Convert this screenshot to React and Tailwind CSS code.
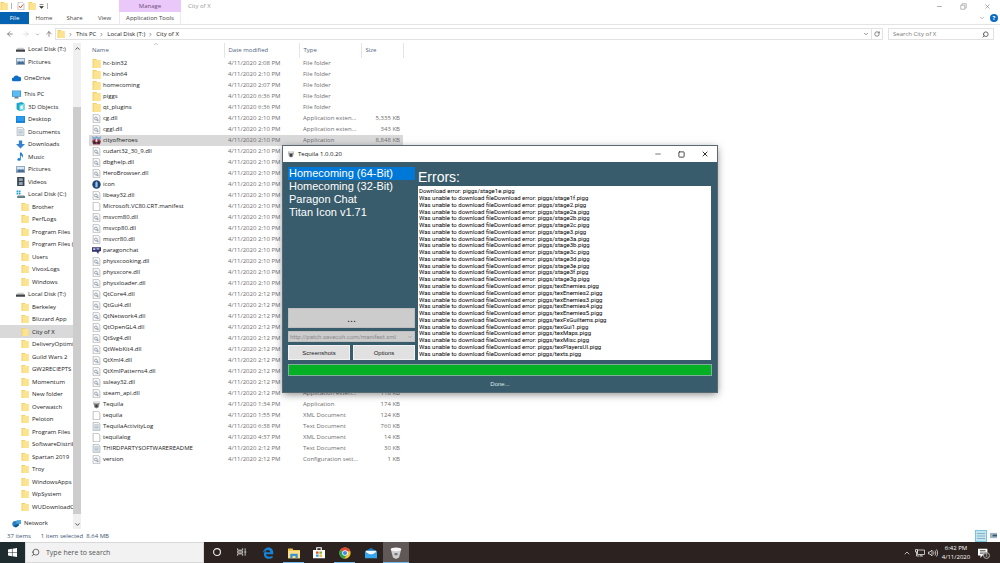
/**
 * Desktop — Explorer window with the Tequila launcher floating on top
 * and the taskbar along the bottom edge.
 */
import React from "react";
import {
  ArrowLeft,
  ArrowRight,
  ArrowUp,
  ChevronDown,
  ChevronRight,
  ChevronUp,
  Minus,
  RotateCw,
  Search,
  Square,
  X,
} from "lucide-react";
import clsx from "clsx";

const FILES = [
  ["hc-bin32", "folder", "4/11/2020 2:08 PM", "File folder", ""],
  ["hc-bin64", "folder", "4/11/2020 2:10 PM", "File folder", ""],
  ["homecoming", "folder", "4/11/2020 2:07 PM", "File folder", ""],
  ["piggs", "folder", "4/11/2020 6:36 PM", "File folder", ""],
  ["qt_plugins", "folder", "4/11/2020 6:36 PM", "File folder", ""],
  ["cg.dll", "dll", "4/11/2020 2:10 PM", "Application exten...", "5,335 KB"],
  ["cggl.dll", "dll", "4/11/2020 2:10 PM", "Application exten...", "343 KB"],
  ["cityofheroes", "hero", "4/11/2020 2:10 PM", "Application", "8,848 KB"],
  ["cudart32_30_9.dll", "dll", "4/11/2020 2:10 PM"],
  ["dbghelp.dll", "dll", "4/11/2020 2:10 PM"],
  ["HeroBrowser.dll", "dll", "4/11/2020 2:10 PM"],
  ["icon", "globe", "4/11/2020 2:10 PM"],
  ["libeay32.dll", "dll", "4/11/2020 2:10 PM"],
  ["Microsoft.VC80.CRT.manifest", "blank", "4/11/2020 2:10 PM"],
  ["msvcm80.dll", "dll", "4/11/2020 2:10 PM"],
  ["msvcp80.dll", "dll", "4/11/2020 2:10 PM"],
  ["msvcr80.dll", "dll", "4/11/2020 2:10 PM"],
  ["paragonchat", "chat", "4/11/2020 2:10 PM"],
  ["physxcooking.dll", "dll", "4/11/2020 2:10 PM"],
  ["physxcore.dll", "dll", "4/11/2020 2:10 PM"],
  ["physxloader.dll", "dll", "4/11/2020 2:10 PM"],
  ["QtCore4.dll", "dll", "4/11/2020 2:12 PM"],
  ["QtGui4.dll", "dll", "4/11/2020 2:12 PM"],
  ["QtNetwork4.dll", "dll", "4/11/2020 2:12 PM"],
  ["QtOpenGL4.dll", "dll", "4/11/2020 2:12 PM"],
  ["QtSvg4.dll", "dll", "4/11/2020 2:12 PM"],
  ["QtWebKit4.dll", "dll", "4/11/2020 2:12 PM"],
  ["QtXml4.dll", "dll", "4/11/2020 2:12 PM"],
  ["QtXmlPatterns4.dll", "dll", "4/11/2020 2:12 PM"],
  ["ssleay32.dll", "dll", "4/11/2020 2:12 PM"],
  ["steam_api.dll", "dll", "4/11/2020 2:12 PM", "Application exten...", "118 KB"],
  ["Tequila", "cup", "4/11/2020 1:34 PM", "Application", "174 KB"],
  ["tequila", "blank", "4/11/2020 1:55 PM", "XML Document", "124 KB"],
  ["TequilaActivityLog", "text", "4/11/2020 6:38 PM", "Text Document", "760 KB"],
  ["tequilalog", "blank", "4/11/2020 4:37 PM", "XML Document", "14 KB"],
  ["THIRDPARTYSOFTWAREREADME", "text", "4/11/2020 2:12 PM", "Text Document", "30 KB"],
  ["version", "dll", "4/11/2020 2:12 PM", "Configuration sett...", "1 KB"],
];

// [label, icon, indent level]
const TREE = [
  [
    ["Local Disk (T:)", "drive", 1],
    ["Pictures", "pictures", 1],
  ],
  [["OneDrive", "cloud", 0]],
  [
    ["This PC", "pc", 0],
    ["3D Objects", "cube", 1],
    ["Desktop", "desktop", 1],
    ["Documents", "text", 1],
    ["Downloads", "download", 1],
    ["Music", "music", 1],
    ["Pictures", "pictures", 1],
    ["Videos", "video", 1],
    ["Local Disk (C:)", "cdrive", 1],
    ["Brother", "folder", 2],
    ["PerfLogs", "folder", 2],
    ["Program Files", "folder", 2],
    ["Program Files (x86)", "folder", 2],
    ["Users", "folder", 2],
    ["VivoxLogs", "folder", 2],
    ["Windows", "folder", 2],
    ["Local Disk (T:)", "drive", 1],
    ["Berkeley", "folder", 2],
    ["Blizzard App", "folder", 2],
    ["City of X", "folder", 2],
    ["DeliveryOptimization", "folder", 2],
    ["Guild Wars 2", "folder", 2],
    ["GW2RECIEPTS", "folder", 2],
    ["Momentum", "folder", 2],
    ["New folder", "folder", 2],
    ["Overwatch", "folder", 2],
    ["Peloton", "folder", 2],
    ["Program Files", "folder", 2],
    ["SoftwareDistribution", "folder", 2],
    ["Spartan 2019", "folder", 2],
    ["Troy", "folder", 2],
    ["WindowsApps", "folder", 2],
    ["WpSystem", "folder", 2],
    ["WUDownloadCache", "folder", 2],
  ],
  [["Network", "network", 0]],
];

const INDENT = ["pl-3 gap-[3px]", "pl-4 gap-[3px]", "pl-[21px] gap-[3px]"];

const PIGGS = [
  "stage1f", "stage2", "stage2a", "stage2b", "stage2c", "stage3", "stage3a",
  "stage3b", "stage3c", "stage3d", "stage3e", "stage3f", "stage3g",
  "texEnemies", "texEnemies2", "texEnemies3", "texEnemies4", "texEnemies5",
  "texFxGuiItems", "texGui1", "texMaps", "texMisc", "texPlayersUI", "texts",
];

const PROFILES = [
  "Homecoming (64-Bit)",
  "Homecoming (32-Bit)",
  "Paragon Chat",
  "Titan Icon v1.71",
];

const GLYPHS = {
  folder: (
    <>
      <path d="M1 0h7l1 2h6v14H1z" fill="#f3d067" />
      <path d="M3 2h12v14H3z" fill="#fce390" />
    </>
  ),
  dll: (
    <>
      <path d="M2 .5h9l3 3v12H2z" fill="#f6f7f8" stroke="#979797" />
      <circle cx="7" cy="8" r="2.5" fill="none" stroke="#8c9ba8" strokeWidth="1.5" />
      <circle cx="10" cy="11" r="1.8" fill="#9aa8b5" />
    </>
  ),
  blank: <path d="M2 .5h9l3 3v12H2z" fill="#fff" stroke="#8f8f8f" />,
  text: (
    <>
      <path d="M2 .5h9l3 3v12H2z" fill="#f4f7f9" stroke="#8b8f92" />
      <path d="M4 5h8M4 7.5h8M4 10h8M4 12.5h8" stroke="#7d98a8" />
    </>
  ),
  hero: (
    <>
      <path d="M0 0l4 2 4-2 4 2 4-2-1 7H1z" fill="#86a9cf" />
      <path d="M0 9c3-5 13-5 16 0l-2 6H2z" fill="#a03a4c" />
      <circle cx="4.500" cy="11.500" r="2.700" fill="#3b2530" />
      <circle cx="11.500" cy="11.500" r="2.700" fill="#3b2530" />
      <path d="M7 5h2l1 5H6z" fill="#f1e3e3" />
    </>
  ),
  globe: (
    <>
      <circle cx="8" cy="8" r="7.500" fill="#1d4675" />
      <path d="M8 2l2 3v8H6V5z" fill="#9dc3e6" />
    </>
  ),
  chat: (
    <>
      <path d="M0 2h16v7l-4 1-1 4-3-4H0z" fill="#33366f" />
      <path d="M2 4h4v3H2zM8 4h5v2H8z" fill="#c7c9e6" />
    </>
  ),
  cup: (
    <>
      <path d="M2 3h12l-2 10-4 2-4-2z" fill="#8b8b8b" />
      <ellipse cx="8" cy="4" rx="6" ry="2" fill="#e4e4e4" />
      <path d="M6 8h4v5H6z" fill="#3e3e3e" />
    </>
  ),
  drive: (
    <>
      <path d="M1 8l2-3h10l2 3z" fill="#c9c9c9" />
      <path d="M0 8h16v4H0z" fill="#3f4347" />
    </>
  ),
  cdrive: (
    <>
      <path d="M1 1h3v3H1zM5 1h3v3H5zM1 5h3v3H1zM5 5h3v3H5z" fill="#20a0d8" />
      <path d="M3 9h12v2H3z" fill="#b9bdc0" />
      <path d="M2 11h14v3H2z" fill="#4b6a70" />
    </>
  ),
  pictures: (
    <>
      <path d="M0 2h16v12H0z" fill="#8a9fb5" />
      <path d="M1.500 3.500h13v4h-13z" fill="#d4e7f7" />
      <path d="M2 12l4-4 3 2 3-2 3 4z" fill="#2e5e8e" />
    </>
  ),
  cloud: <path d="M3 13a3.500 3.500 0 010-7 5 5 0 019-1 4 4 0 011 8z" fill="#0f6fc6" />,
  pc: (
    <>
      <path d="M0 1h16v11H0z" fill="#2f86c4" />
      <path d="M1 2h14v9H1z" fill="#5cbcf0" />
      <path d="M5 12h6l1 3H4z" fill="#6a8190" />
    </>
  ),
  cube: (
    <>
      <path d="M1 2l9-2 5 3v11l-9 2-5-3z" fill="#1fa5c6" />
      <path d="M6 5l9-2v11l-9 2z" fill="#6fd9ea" />
      <path d="M8 7l4-1v6l-4 1z" fill="#fff" />
    </>
  ),
  desktop: (
    <>
      <path d="M0 2h16v12H0z" fill="#0a78d1" />
      <path d="M1 3h14v8H1z" fill="#2a9bf0" />
    </>
  ),
  download: <path d="M5 1h6v6h5l-8 8-8-8h5z" fill="#3583cf" />,
  music: (
    <path
      d="M7 1v10a3 2.500 0 10 1.500 2V6c3 1 3 3 2 5 4-4 1-7-1-10z"
      fill="#1c80d4"
    />
  ),
  video: (
    <>
      <path d="M2 0h13v16H2z" fill="#3b4147" />
      <path d="M5 2h7v5H5zM5 9h7v5H5z" fill="#8aa4b8" />
    </>
  ),
  network: (
    <>
      <circle cx="6" cy="9" r="5.500" fill="#2a7fc0" />
      <path d="M8 2h8v7H8z" fill="#4aa6df" />
      <path d="M3 12l8-4 2 3-6 4z" fill="#16598f" />
    </>
  ),
};

function Glyph({ name, className = "size-2" }) {
  return (
    <svg viewBox="0 0 16 16" className={clsx("block shrink-0", className)} aria-hidden="true">
      {GLYPHS[name]}
    </svg>
  );
}

function Ribbon() {
  return (
    <header className="h-[25px] border-b border-[#e4e4e4] flex">
      <div className="flex flex-col">
        <div className="h-3 w-[119px] flex items-center gap-[3px]">
          <Glyph name="folder" />
          <span className="w-px h-[6px] bg-[#b5b5b5]" />
          <svg viewBox="0 0 16 16" className="size-2 ml-[2px]" aria-hidden="true">
            <path d="M2 .5h9l3 3v12H2z" fill="#fff" stroke="#8f8f8f" />
            <path d="M4 8l3 4 5-7" fill="none" stroke="#d2573b" strokeWidth="2" />
          </svg>
          <Glyph name="folder" />
          <svg viewBox="0 0 8 8" className="size-[5px]" aria-hidden="true">
            <path d="M1 1h6M1 4h6L4 7z" stroke="#333" fill="#333" />
          </svg>
          <span className="w-px h-[6px] bg-[#b5b5b5]" />
        </div>
        <nav className="h-3 flex text-[#444]">
          <button className="w-[29px] bg-[#0563b1] text-white">File</button>
          <button className="w-[30px]">Home</button>
          <button className="w-[31px]">Share</button>
          <button className="w-[29px]">View</button>
        </nav>
      </div>
      <div className="w-[62px] flex flex-col">
        <div className="h-3 bg-[#ebc8fa] text-[#6b4a78] grid place-items-center">Manage</div>
        <button className="h-3 text-[#444] whitespace-nowrap border-x border-[#f3e4f8]">
          Application Tools
        </button>
      </div>
      <h1 className="h-3 pl-[7px] leading-3 text-[#9a9a9a]">City of X</h1>
      <div className="ml-auto flex flex-col items-end text-[#777]">
        <div className="h-3 flex items-center gap-[17px] pr-[9px]">
          <button aria-label="Minimize"><Minus className="size-[7px]" strokeWidth={2} /></button>
          <button aria-label="Restore">
            <svg viewBox="0 0 14 14" className="size-[7px]" fill="none" stroke="currentColor">
              <path d="M1.500 4.500h8v8h-8zM4 4V1.500h8.500V10H10" />
            </svg>
          </button>
          <button aria-label="Close"><X className="size-[7px]" strokeWidth={2} /></button>
        </div>
        <div className="h-3 flex items-center gap-[5px] pr-[2px]">
          <button aria-label="Collapse ribbon"><ChevronDown className="size-[6px]" /></button>
          <button
            aria-label="Help"
            className="size-2 rounded-full bg-[#0a6cc0] text-white text-[6px] leading-2 font-bold"
          >
            ?
          </button>
        </div>
      </div>
    </header>
  );
}

function AddressBar() {
  return (
    <div className="h-[18px] flex items-center pl-[6px] pr-[6px] text-[#555]">
      <div className="flex items-center w-[49px]">
        <button aria-label="Back"><ArrowLeft className="size-2" /></button>
        <button aria-label="Forward" className="ml-2 text-[#d0d0d0]"><ArrowRight className="size-2" /></button>
        <button aria-label="Recent" className="ml-[5px]"><ChevronDown className="size-[5px]" /></button>
        <button aria-label="Up" className="ml-[5px]"><ArrowUp className="size-2" /></button>
      </div>
      <div className="flex-1 h-3 border border-[#e2e2e2] flex items-center pl-px text-[#222]">
        <Glyph name="folder" />
        {["This PC", "Local Disk (T:)", "City of X"].map((crumb) => (
          <React.Fragment key={crumb}>
            <ChevronRight className="size-[5px] mx-[3px] text-[#555]" strokeWidth={3} />
            <a href="#" className="whitespace-nowrap">{crumb}</a>
          </React.Fragment>
        ))}
        <button aria-label="History" className="ml-auto text-[#666]"><ChevronDown className="size-[6px]" strokeWidth={3} /></button>
        <span className="w-px h-full bg-[#e2e2e2] mx-[2px]" />
        <button aria-label="Refresh" className="pr-[2px] text-[#666]"><RotateCw className="size-[6px]" strokeWidth={3} /></button>
      </div>
      <label className="ml-[5px] w-[106px] h-3 border border-[#e2e2e2] flex items-center px-1">
        <input
          aria-label="Search City of X"
          placeholder="Search City of X"
          className="flex-1 min-w-0 outline-none placeholder:text-[#777]"
        />
        <Search className="size-[7px] -scale-x-100" strokeWidth={3} />
      </label>
    </div>
  );
}

function Sidebar() {
  return (
    <aside className="w-[82px] shrink-0 flex">
      <div className="flex-1 min-w-0 flex flex-col gap-1 text-[#222]">
        {TREE.map((group, i) => (
          <ul key={i}>
            {group.map(([label, icon, level], j) => (
              <li
                key={j}
                className={clsx(
                  "odd:h-3 even:h-[13px] flex items-center overflow-hidden whitespace-nowrap",
                  INDENT[level],
                  label === "City of X" && "bg-[#d9d9d9]",
                )}
              >
                <Glyph name={icon} className={level === 2 ? "size-2" : "size-[9px]"} />
                {label}
              </li>
            ))}
          </ul>
        ))}
      </div>
      <div className="w-2 mr-px bg-[#f0f0f0] text-[#444] flex flex-col items-center">
        <ChevronUp className="size-[7px] mt-[2px]" strokeWidth={3} />
        <div className="mt-[55px] w-full flex-1 bg-[#cdcdcd]" />
        <ChevronDown className="size-[7px] mt-[7px] mb-px" strokeWidth={3} />
      </div>
    </aside>
  );
}

function FileList() {
  return (
    <main className="flex-1 min-w-0 pl-[7px]">
      <table className="table-fixed w-[314px] leading-[11px] whitespace-nowrap text-[#6d6d6d]">
        <thead>
          <tr className="h-[15px] text-left text-[#51647d]">
            <th className="w-[135px] pl-[3px] font-normal border-r border-[#e5e5e5] relative">
              Name
              <ChevronUp className="absolute top-[-2px] left-16 size-[6px] text-[#888]" />
            </th>
            <th className="w-[75px] pl-1 font-normal border-r border-[#e5e5e5]">Date modified</th>
            <th className="w-[62px] pl-1 font-normal border-r border-[#e5e5e5]">Type</th>
            <th className="w-[42px] pl-1 font-normal border-r border-[#e5e5e5]">Size</th>
          </tr>
        </thead>
        <tbody>
          {FILES.map(([name, icon, date, type, size]) => (
            <tr key={name} className={clsx("h-[11px]", name === "cityofheroes" && "bg-[#d9d9d9]")}>
              <td className="text-[#222]">
                <div className="flex items-center gap-[2px] pl-[3px]">
                  <Glyph name={icon} className="size-[9px]" />
                  {name}
                </div>
              </td>
              <td className="pl-1">{date}</td>
              <td className="pl-1">{type}</td>
              <td className="pr-[3px] text-right">{size}</td>
            </tr>
          ))}
        </tbody>
      </table>
    </main>
  );
}

function StatusBar() {
  return (
    <footer className="h-[13px] flex items-center pl-[7px] pr-px text-[#3d5573]">
      <span>37 items</span>
      <span className="ml-[10px]">1 item selected&nbsp; 8.64 MB</span>
      <div className="ml-auto flex items-center">
        <button aria-label="Details view" className="size-3 bg-[#bfe6f2] border border-[#7cc3dc] grid place-items-center">
          <svg viewBox="0 0 8 8" className="size-2" stroke="#8fb2c2"><path d="M0 1.500h8M0 4h8M0 6.500h8" /></svg>
        </button>
        <button aria-label="Large icons" className="size-3 grid place-items-center">
          <svg viewBox="0 0 8 8" className="size-[7px]"><path d="M0 1h8v6H0z" fill="#9fb4c2" /><path d="M3 3h5v2H3z" fill="#33566e" /></svg>
        </button>
      </div>
    </footer>
  );
}

function Launcher() {
  return (
    <section
      aria-label="Tequila"
      className="absolute left-[283px] top-[146px] w-[434px] flex flex-col bg-[#385c6c] font-['Liberation_Sans',sans-serif] text-white shadow-[0_2px_8px_rgba(0,0,0,0.5)] outline outline-[#5a6a72]"
    >
      <div className="h-4 bg-white text-[#111] flex items-center pl-1 pr-2 font-['Open_Sans',sans-serif]">
        <Glyph name="cup" />
        <h2 className="ml-[3px]">Tequila 1.0.0.20</h2>
        <div className="ml-auto flex items-center gap-4 text-[#333]">
          <button aria-label="Minimize"><Minus className="size-2" /></button>
          <button aria-label="Maximize"><Square className="size-[7px]" strokeWidth={3} /></button>
          <button aria-label="Close"><X className="size-2" strokeWidth={3} /></button>
        </div>
      </div>

      <div className="flex gap-[3px] pt-[5px] pl-[5px] pr-[6px]">
        <div className="w-[127px] flex flex-col">
          <ul role="listbox" aria-label="Profiles" className="flex-1 text-[11px] leading-[13px]">
            {PROFILES.map((profile, i) => (
              <li
                key={profile}
                role="option"
                aria-selected={i === 0}
                className={clsx("pl-px", i === 0 && "bg-[#0078d7]")}
              >
                {profile}
              </li>
            ))}
          </ul>
          <button className="h-5 bg-[#cccccc] border border-[#bfbfbf] text-[#222] text-[11px] leading-4">...</button>
          <div className="mt-[3px] h-[11px] bg-[#cccccc] border border-[#bfbfbf] text-[#8b8b8b] flex items-center pr-px">
            <select
              aria-label="Manifest"
              disabled
              className="flex-1 min-w-0 appearance-none pl-px font-['Roboto',sans-serif]"
            >
              <option>http://patch.savecoh.com/manifest.xml</option>
            </select>
            <ChevronDown className="size-[6px]" />
          </div>
          <div className="mt-[3px] grid grid-cols-2 gap-[3px] text-[#222]">
            <button className="h-[15px] bg-[#e1e1e1] border border-[#f2f2f2]">Screenshots</button>
            <button className="h-[15px] bg-[#e1e1e1] border border-[#f2f2f2]">Options</button>
          </div>
        </div>

        <div className="flex-1 flex flex-col">
          <h3 className="h-[19px] text-[14px] leading-5">Errors:</h3>
          <ul
            role="log"
            className="h-[174px] grid auto-rows-fr items-center bg-white text-black pl-px pt-[2px] pb-[3px] leading-[6px] whitespace-nowrap font-['Liberation_Sans_Narrow','Roboto',sans-serif]"
          >
            <li>Download error: piggs/stage1e.pigg</li>
            {PIGGS.map((pigg) => (
              <li key={pigg}>Was unable to download fileDownload error: piggs/{pigg}.pigg</li>
            ))}
          </ul>
        </div>
      </div>

      <div className="px-[5px] pt-1">
        <div
          role="progressbar"
          aria-label="Download"
          aria-valuenow={100}
          className="h-3 bg-[#06b025] border border-[#7fae9a]"
        />
      </div>
      <p className="h-4 leading-4 text-center text-[#dfe7ea]">Done...</p>
    </section>
  );
}

// Taskbar buttons; `open` draws the running underline
const APPS = [
  {
    name: "Cortana",
    icon: <circle cx="8" cy="8" r="5.500" fill="none" stroke="#eee" strokeWidth="1.800" />,
  },
  {
    name: "Task View",
    icon: <path d="M1 2v3h8V2M1 14v-3h8v3M1 6.500h8v3H1zM13 2v12M12 8h3" fill="none" stroke="#ddd" strokeWidth="1.300" />,
  },
  {
    name: "Edge",
    icon: (
      <path
        d="M1 8C2 3 5 .5 8.500 .5c4 0 6.500 3 6.500 6.500v2.500H5.500c.3 4 5 4 8.500 2.200v3C9 17 2.500 15.500 2.500 9.500 2.500 7.500 4 5.500 6 4.700 5.500 5.500 5.300 6 5.300 7H11C11 3 5 2.500 1 8z"
        fill="#1583d8"
      />
    ),
  },
  {
    name: "File Explorer",
    open: true,
    icon: (
      <>
        <path d="M0 2h6l1 2h9v11H0z" fill="#f0c24b" />
        <path d="M0 5h16v10H0z" fill="#fbe08a" />
        <path d="M3 9h10v6h-3v-3H6v3H3z" fill="#3e93cf" />
      </>
    ),
  },
  {
    name: "Store",
    icon: (
      <>
        <path d="M5 5V1h6v4" fill="none" stroke="#fff" strokeWidth="1.500" />
        <path d="M0 4h16v11H0z" fill="#fff" />
        <path d="M4 6h3.500v3H4z" fill="#e2512e" />
        <path d="M8.500 6H12v3H8.500z" fill="#7db72f" />
        <path d="M4 10h3.500v3H4z" fill="#2b9fe0" />
        <path d="M8.500 10H12v3H8.500z" fill="#f6b51e" />
      </>
    ),
  },
  {
    name: "Chrome",
    open: true,
    icon: (
      <>
        <circle cx="8" cy="8" r="7.500" fill="#f5c731" />
        <path d="M8 8L1.500 4.250A7.500 7.500 0 0114.500 4.250L15 5.500H8z" fill="#de4a39" />
        <path d="M8 8L1.500 4.250A7.500 7.500 0 007 15.500l3-4.500z" fill="#2ba04f" />
        <circle cx="8" cy="8" r="3.700" fill="#fff" />
        <circle cx="8" cy="8" r="2.800" fill="#4285f4" />
      </>
    ),
  },
  {
    name: "Mail",
    icon: (
      <>
        <path d="M0 6l8-5 8 5v8H0z" fill="#1272bd" />
        <path d="M1 5h14v5H1z" fill="#f2f8fc" />
        <path d="M0 6l8 5 8-5v9H0z" fill="#35a6ee" />
      </>
    ),
  },
  {
    name: "Tequila",
    open: true,
    active: true,
    icon: (
      <>
        <path d="M1 3h14l-3 11-4 2-4-2z" fill="#cfcfcf" />
        <ellipse cx="8" cy="3" rx="7" ry="2.500" fill="#f7f7f7" />
        <path d="M6 8h4v3H6z" fill="#777" />
      </>
    ),
  },
];

function Taskbar() {
  return (
    <footer className="h-[21px] flex bg-[#2c2320] text-white">
      <button aria-label="Start" className="w-[25px] bg-[#1e2b2f] grid place-items-center">
        <svg viewBox="0 0 16 16" className="size-[9px]" fill="#fff">
          <path d="M0 2.500l7-1v6H0zM8 1.300L16 0v7.500H8zM0 8.500h7v6l-7-1zM8 8.500h8V16l-8-1.300z" />
        </svg>
      </button>
      <label className="w-[179px] bg-[#f2f2f2] border border-[#d8d8d8] flex items-center gap-[6px] pl-[5px] text-[#444]">
        <Search className="size-[9px] -scale-x-100" />
        <input
          aria-label="Type here to search"
          placeholder="Type here to search"
          className="flex-1 min-w-0 outline-none text-[7px] placeholder:text-[#555]"
        />
      </label>
      <div className="w-[205px] flex">
        {APPS.map((app) => (
          <button
            key={app.name}
            aria-label={app.name}
            className={clsx(
              "flex-1 flex flex-col items-center justify-end",
              app.active && "bg-[#5f5856]",
            )}
          >
            <svg viewBox="0 0 16 16" className={clsx(app.name === "Task View" || app.name === "Cortana" ? "size-[10px] mb-[5px]" : "size-3 mb-[3px]")}>
              {app.icon}
            </svg>
            <span
              className={clsx(
                "h-px",
                app.active ? "w-full" : "w-[21px]",
                app.open && "bg-[#76b9ed]",
              )}
            />
          </button>
        ))}
      </div>
      <div className="ml-auto flex items-center pr-[10px]">
        <ChevronUp className="size-2" />
        <svg viewBox="0 0 20 16" className="ml-1 w-[10px] h-2" fill="none" stroke="#eee" strokeWidth="1.500">
          <path d="M5 2h14v9H5zM9 14h7M12 11v3M1 1h4v5H1zM3 6v8h5" />
        </svg>
        <svg viewBox="0 0 20 16" className="ml-[3px] w-[10px] h-2" fill="none" stroke="#eee" strokeWidth="1.500">
          <path d="M1 6h3l4-4v12l-4-4H1zM11 5c1 2 1 4 0 6M14 3c2 3 2 7 0 10M17 1c3 4 3 10 0 14" />
        </svg>
        <time className="ml-[3px] w-[30px] text-center leading-[9px] whitespace-nowrap">
          6:42 PM
          <br />
          4/11/2020
        </time>
        <button aria-label="1 new notification" className="ml-[7px] mr-[2px] relative">
          <svg viewBox="0 0 16 16" className="size-[10px]">
            <path d="M0 1h15v11H7l-3 4v-4H0z" fill="#fff" />
            <path d="M3 4h9M3 6.500h9M3 9h6" stroke="#2c2320" />
          </svg>
          <span className="absolute left-[5px] top-1 size-[7px] rounded-full bg-[#3a312e] border border-[#aaa] text-[5px] leading-[5px]">
            1
          </span>
        </button>
      </div>
    </footer>
  );
}

export default function App() {
  return (
    <div className="relative min-h-screen flex flex-col bg-white font-['Open_Sans',sans-serif] text-[6px] leading-2">
      <Ribbon />
      <AddressBar />
      <div className="flex-1 flex">
        <Sidebar />
        <FileList />
      </div>
      <StatusBar />
      <Taskbar />
      <Launcher />
    </div>
  );
}
